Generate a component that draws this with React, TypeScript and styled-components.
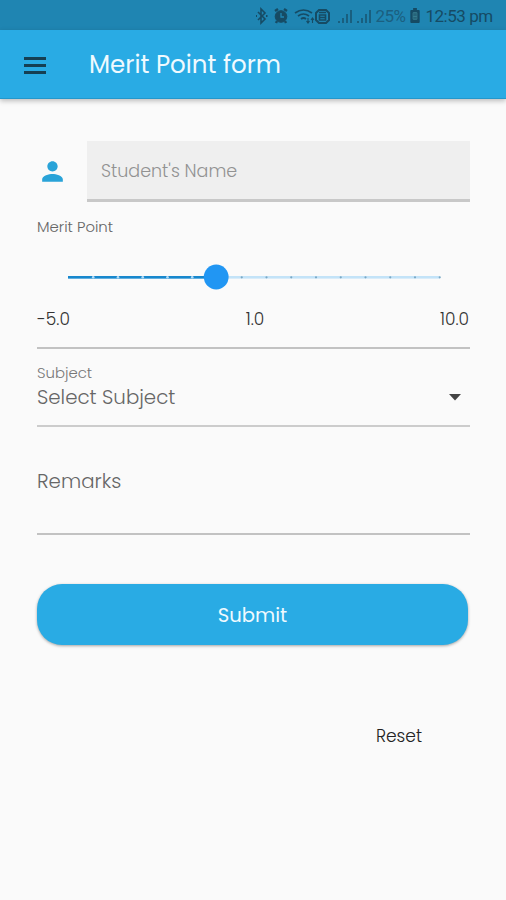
import React from 'react';
import styled, { createGlobalStyle } from 'styled-components';

const GlobalStyle = createGlobalStyle`
  * { box-sizing: border-box; }
  body { margin: 0; background: #fafafa; }
`;

const Screen = styled.div`
  width: 506px;
  height: 900px;
  display: flex;
  flex-direction: column;
  background: #fafafa;
  font-family: Poppins, Inter, sans-serif;
  overflow: hidden;
`;

const StatusBar = styled.header`
  height: 30px;
  flex: none;
  display: flex;
  align-items: center;
  padding: 2px 0 0 254px;
  background: #1f85b2;
  color: #164b64;
`;

const StatusIcons = styled.svg`
  width: 118px;
  height: 20px;
  flex: none;
`;

const BatteryIcon = styled.svg`
  width: 10px;
  height: 15px;
  margin: 0 5px 2px 5px;
`;

const StatusText = styled.span<{ $tone: string; $spacing: number }>`
  font: 400 17px/20px Roboto, sans-serif;
  letter-spacing: ${p => p.$spacing}px;
  color: ${p => p.$tone};
  white-space: nowrap;
`;

const AppBar = styled.div`
  height: 69px;
  flex: none;
  display: flex;
  align-items: center;
  padding: 2px 0 0 24px;
  gap: 43px;
  background: #29abe4;
  border-bottom: 1px solid #2397cb;
  box-shadow: 0 2px 5px rgba(0, 0, 0, 0.25);
`;

const MenuButton = styled.button`
  width: 22px;
  height: 17px;
  padding: 0;
  border: 0;
  background: none;
  display: flex;
  flex-direction: column;
  justify-content: space-between;
`;

const MenuLine = styled.span`
  height: 3px;
  width: 22px;
  background: #153f53;
`;

const Label = styled.span<{ $size: number; $color: string; $weight?: number }>`
  display: block;
  margin: 0;
  font-size: ${p => p.$size}px;
  line-height: 24px;
  font-weight: ${p => p.$weight ?? 300};
  color: ${p => p.$color};
  white-space: nowrap;
`;

const Form = styled.main`
  display: flex;
  flex-direction: column;
  padding: 42px 36px 0 37px;
`;

const NameRow = styled.div`
  display: flex;
  align-items: center;
  height: 61px;
`;

const PersonIcon = styled.svg`
  width: 31px;
  height: 31px;
  margin-right: 19px;
  flex: none;
`;

const NameField = styled.div`
  flex: 1;
  height: 61px;
  display: flex;
  align-items: center;
  padding: 2px 0 0 14px;
  background: #efefef;
  border-bottom: 3px solid #c8c8c8;
`;

const SliderGroup = styled.section`
  height: 147px;
  padding-top: 13px;
  border-bottom: 2px solid #c2c2c2;
`;

const Slider = styled.svg`
  display: block;
  width: 433px;
  height: 30px;
  margin-top: 23px;
`;

const Scale = styled.div`
  display: flex;
  justify-content: space-between;
  margin-top: 15px;
  padding-right: 1px;
`;

const SelectField = styled.section`
  height: 78px;
  padding-top: 12px;
  border-bottom: 2px solid #cccccc;
`;

const SelectRow = styled.div`
  display: flex;
  align-items: center;
  justify-content: space-between;
  padding-right: 9px;
`;

const Arrow = styled.svg`
  width: 12px;
  height: 7px;
`;

const RemarksField = styled.section`
  height: 108px;
  padding-top: 42px;
  border-bottom: 2px solid #c2c2c2;
`;

const SubmitButton = styled.button`
  width: 431px;
  height: 61px;
  margin-top: 49px;
  padding: 0;
  display: flex;
  align-items: center;
  justify-content: center;
  border: 0;
  border-radius: 25px;
  background: #29abe4;
  box-shadow: 0 1px 3px rgba(0, 0, 0, 0.35);
  font-family: inherit;
`;

const ResetButton = styled.button`
  align-self: flex-end;
  margin: 79px 48px 0 0;
  padding: 0;
  border: 0;
  background: none;
  font-family: inherit;
`;

const STEPS = 15;
const TRACK_START = 31.5;
const TRACK_STEP = 24.75;

function MeritSlider({ value }: { value: number }) {
  const x = TRACK_START + TRACK_STEP * value;
  const end = TRACK_START + TRACK_STEP * STEPS;
  return (
    <Slider viewBox="0 0 433 30">
      <rect x={TRACK_START} y="14" width={end - TRACK_START} height="2.6" fill="#c3e3f8" />
      <rect x={TRACK_START - 0.5} y="14" width={x - TRACK_START} height="2.6" fill="#1787cd" />
      {Array.from({ length: STEPS + 1 }, (_, i) => {
        const past = i > value;
        return (
          <circle
            key={i}
            cx={TRACK_START + TRACK_STEP * i}
            cy="15.3"
            r={past ? 1.1 : 1.3}
            fill={past ? '#7aa8c5' : '#b4dcf7'}
            opacity={i === 0 ? 0 : 1}
          />
        );
      })}
      <circle cx={x - 0.8} cy="15" r="12.4" fill="#2196f3" />
    </Slider>
  );
}

function Signal({ x }: { x: number }) {
  return (
    <g fill="currentColor" stroke="none" opacity="0.65">
      <rect x={x} y="15" width="2" height="2" />
      <rect x={x + 4} y="12" width="2" height="5" />
      <rect x={x + 8} y="8" width="2" height="9" />
      <rect x={x + 12} y="4" width="2" height="13" />
    </g>
  );
}

export default function App() {
  return (
    <Screen>
      <GlobalStyle />
      <StatusBar>
        <StatusIcons viewBox="0 0 118 20" fill="none" stroke="currentColor">
          <path d="M4 6l7 7-4 4V3l4 4-7 7" strokeWidth="1.6" />
          <path d="M2 10h1M12 10h1.5" strokeWidth="2" />
          <circle cx="27" cy="10.5" r="5.8" fill="currentColor" />
          <path d="M21 5l3-2M33 5l-3-2M23 15l-1 2M31 15l1 2" strokeWidth="2.4" />
          <path d="M27 7v4h3" stroke="#1f85b2" strokeWidth="1.3" />
          <path d="M41 7q8.5-6 17 0M44 10q5.5-4 11 0M47 13q2.5-2 5 0" strokeWidth="1.7" />
          <path d="M54 12v4M52.5 15l1.5 2 1.5-2M58.5 17v-4M57 14l1.5-2 1.5 2" strokeWidth="1.1" />
          <path d="M65 4h7l3 3v7l-3 3h-7l-3-3V7z" strokeWidth="2" />
          <path d="M65 6.5h7M65.5 9h6v5h-6zM66 11.5h5" strokeWidth="1.6" />
          <Signal x={84} />
          <Signal x={103} />
        </StatusIcons>
        <StatusText $tone="#1b5f80" $spacing={-0.6}>&nbsp;25%</StatusText>
        <BatteryIcon viewBox="0 0 10 16">
          <path d="M3 0h4v2h2q1 0 1 1v12q0 1-1 1H1q-1 0-1-1V3q0-1 1-1h2z" fill="#164b64" />
          <path d="M3 5h4v7H3z" fill="none" stroke="#3a8092" />
          <path d="M5 5v7M3 9h4" stroke="#3a8092" />
        </BatteryIcon>
        <StatusText $tone="#164b64" $spacing={-0.45}>12:53 pm</StatusText>
      </StatusBar>
      <AppBar>
        <MenuButton aria-label="Menu">
          <MenuLine />
          <MenuLine />
          <MenuLine />
        </MenuButton>
        <Label as="h1" $size={24.5} $color="#effaff" $weight={400}>Merit Point form</Label>
      </AppBar>
      <Form>
        <NameRow>
          <PersonIcon viewBox="0 0 24 24">
            <path
              d="M12 12c2.21 0 4-1.79 4-4s-1.79-4-4-4-4 1.79-4 4 1.79 4 4 4zm0 2c-2.67 0-8 1.34-8 4v2h16v-2c0-2.66-5.33-4-8-4z"
              fill="#29a3d8"
            />
          </PersonIcon>
          <NameField>
            <Label $size={17.5} $color="#929292">Student's Name</Label>
          </NameField>
        </NameRow>
        <SliderGroup>
          <Label $size={14.9} $color="#666">Merit Point</Label>
          <MeritSlider value={6} />
          <Scale>
            <Label $size={17} $color="#333">-5.0</Label>
            <Label $size={17} $color="#333">1.0</Label>
            <Label $size={17} $color="#333">10.0</Label>
          </Scale>
        </SliderGroup>
        <SelectField>
          <Label $size={14.9} $color="#777">Subject</Label>
          <SelectRow>
            <Label $size={19.8} $color="#666">Select Subject</Label>
            <Arrow viewBox="0 0 12 7"><path d="M0 0h12L6 6.5z" fill="#444" /></Arrow>
          </SelectRow>
        </SelectField>
        <RemarksField>
          <Label $size={19.8} $color="#666">Remarks</Label>
        </RemarksField>
        <SubmitButton>
          <Label $size={19.6} $color="#effaff" $weight={400}>Submit</Label>
        </SubmitButton>
        <ResetButton>
          <Label $size={17.1} $color="#222">Reset</Label>
        </ResetButton>
      </Form>
    </Screen>
  );
}
